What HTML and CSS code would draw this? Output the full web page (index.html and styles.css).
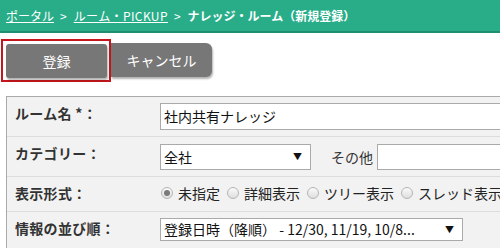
FILE: index.html
```html
<!DOCTYPE html>
<html lang="ja">
<head>
    <meta charset="UTF-8">
    <title>ナレッジ・ルーム（新規登録）</title>
    <link rel="stylesheet" href="styles.css">
</head>
<body>
    <div class="header">
        <a href="#">ポータル</a><span class="sep">&gt;</span><a href="#" class="pickup">ルーム・PICKUP</a><span class="sep">&gt;</span><b>ナレッジ・ルーム（新規登録）</b>
    </div>

    <div class="actions">
        <div class="focus-ring">
            <button class="btn">登録</button>
        </div>
        <button class="btn">キャンセル</button>
    </div>

    <div class="form">
        <div class="row row-name">
            <div class="label">ルーム名 *：</div>
            <div class="value">
                <div class="text-input wide">社内共有ナレッジ</div>
            </div>
        </div>
        <div class="row row-category">
            <div class="label">カテゴリー：</div>
            <div class="value">
                <div class="select small">全社<span class="arrow">▼</span></div>
                <span class="other">その他</span>
                <div class="text-input other-input"></div>
            </div>
        </div>
        <div class="row row-display">
            <div class="label">表示形式：</div>
            <div class="value radios">
                <label class="radio checked"><span class="dot"></span>未指定</label>
                <label class="radio"><span class="dot"></span>詳細表示</label>
                <label class="radio"><span class="dot"></span>ツリー表示</label>
                <label class="radio"><span class="dot"></span>スレッド表示</label>
            </div>
        </div>
        <div class="row row-order">
            <div class="label">情報の並び順：</div>
            <div class="value">
                <div class="select large">登録日時（降順） - 12/30, 11/19, 10/8...<span class="arrow">▼</span></div>
            </div>
        </div>
    </div>
</body>
</html>
```

FILE: styles.css
```css
* {
    margin: 0;
    padding: 0;
    box-sizing: border-box;
}

body {
    width: 500px;
    height: 248px;
    overflow: hidden;
    background: #fff;
    font-family: "Noto Sans CJK JP", "Noto Sans", sans-serif;
    font-size: 13px;
    color: #222;
}

.header {
    height: 33px;
    background-color: #29ad89;
    border-bottom: 2px solid #1e8f70;
    color: #fff;
    font-size: 12px;
    line-height: 31px;
    padding-left: 6px;
    white-space: nowrap;
}

.header a {
    color: #fff;
}

.header .pickup {
    letter-spacing: 0.4px;
}

.header .sep {
    margin: 0 7px 0 6px;
}

.actions {
    display: flex;
    align-items: flex-start;
    margin: 6px 0 0 1px;
}

.focus-ring {
    border: 2px solid #c4161c;
    padding: 3px 2px 2px 3px;
}

.btn {
    display: block;
    width: 101px;
    height: 34px;
    background-color: #777;
    color: #fff;
    border: none;
    border-radius: 3px;
    font-family: inherit;
    font-size: 14px;
    box-shadow: 1px 2px 2px rgba(0, 0, 0, 0.3);
}

.actions > .btn {
    margin-top: 4px;
    border-radius: 0 6px 6px 0;
}

.form {
    margin: 14px 0 0 6px;
    width: 520px;
    background-color: #f2f2f2;
    border-top: 1px solid #aaa;
    border-left: 1px solid #aaa;
}

.row {
    display: flex;
    border-bottom: 1px solid #dcdcdc;
}

.row-name { height: 40px; }
.row-category { height: 40px; }
.row-display { height: 35px; }
.row-order { height: 40px; border-bottom: none; }

.label {
    flex-shrink: 0;
    width: 153px;
    padding: 6px 0 0 8px;
    font-weight: bold;
    font-size: 14px;
    color: #333;
    letter-spacing: 0.3px;
}

.value {
    display: flex;
    align-items: flex-start;
    padding-top: 6px;
}

.row-category .value { padding-top: 7px; }
.row-order .value { padding-top: 6px; }

.text-input {
    height: 27px;
    background: #fff;
    border: 1px solid #aaa;
    padding-left: 3px;
    line-height: 25px;
    font-size: 14px;
    color: #111;
}

.wide { width: 400px; }

.select {
    position: relative;
    height: 26px;
    background: #fff;
    border: 1px solid #aaa;
    padding-left: 3px;
    line-height: 24px;
    font-size: 14px;
    color: #111;
    white-space: nowrap;
}

.select.small { width: 151px; }
.select.large { width: 303px; height: 23px; line-height: 21px; }

.arrow {
    position: absolute;
    right: 8px;
    top: 0;
    font-size: 9px;
}

.other {
    margin: 0 4px 0 20px;
    line-height: 26px;
    font-size: 14px;
    color: #333;
}

.other-input {
    width: 140px;
    height: 26px;
}

.radios {
    padding: 6px 0 0 0;
}

.radio {
    display: flex;
    align-items: center;
    font-size: 14px;
    color: #222;
    margin-right: 6px;
    line-height: 20px;
    white-space: nowrap;
}

.dot {
    width: 12px;
    height: 12px;
    border-radius: 50%;
    border: 1px solid #b5b5b5;
    background: linear-gradient(#fafafa, #dedede);
    margin: 0 5px 0 1px;
    display: flex;
    align-items: center;
    justify-content: center;
}

.radio.checked .dot::after {
    content: "";
    width: 6px;
    height: 6px;
    border-radius: 50%;
    background: #7a7a7a;
}
```
